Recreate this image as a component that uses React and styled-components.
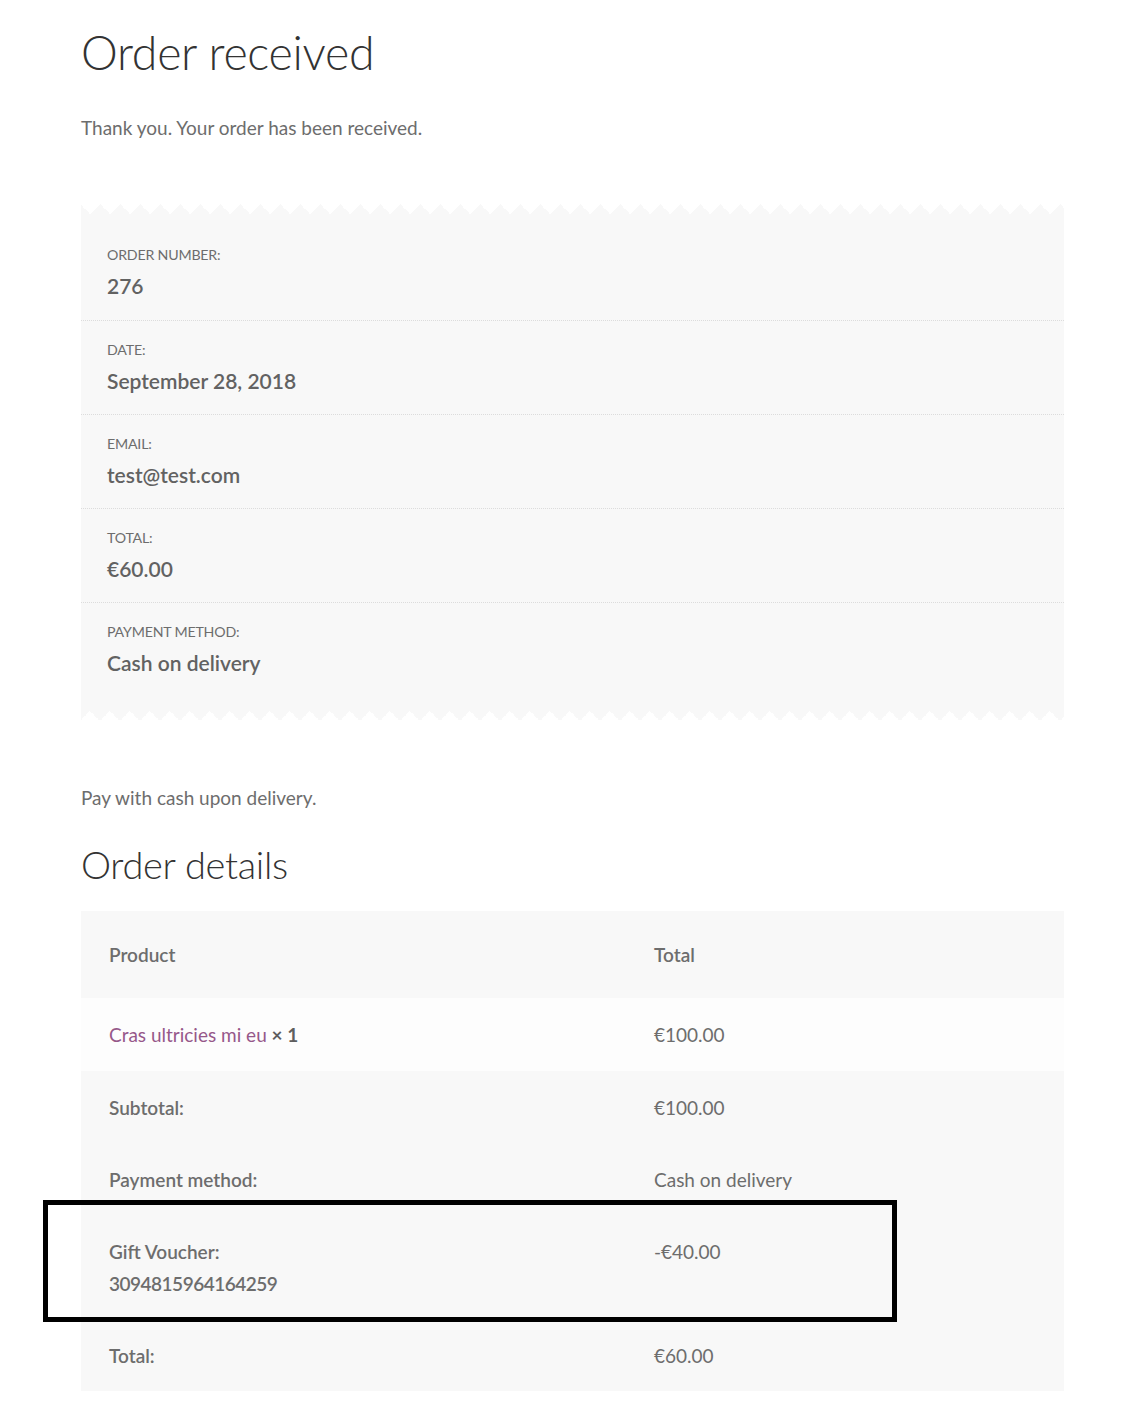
import styled, { createGlobalStyle } from "styled-components"

const Global = createGlobalStyle`
    body {
        margin: 0;
        background: #ffffff;
        font-family: "Lato", "Open Sans", "Liberation Sans", sans-serif;
        color: #6d6d6d;
    }
`

const Page = styled.div`
    width: 983px;
    padding: 22px 0 36px 81px;
`

const Title = styled.h1`
    margin: 0;
    font-size: 46.5px;
    line-height: 60px;
    font-weight: 300;
    color: #333333;
    letter-spacing: -0.3px;
`

const SubTitle = styled.h2`
    margin: 29px 0 24px;
    font-size: 38px;
    line-height: 46px;
    font-weight: 300;
    color: #333333;
    letter-spacing: -0.3px;
`

const Text = styled.p`
    margin: ${(props) => props.margin || "0"};
    font-size: 19px;
    line-height: 29px;
`

const Panel = styled.div`
    margin-top: 62px;
`

const Zigzag = styled.div`
    height: 10px;
    background-size: 20px 10px;
    background-repeat: repeat-x;
    background-position: 9px 0;
    background-image: ${(props) =>
        props.edge === "bottom"
            ? "conic-gradient(from -45deg at 50% 100%, #f8f8f8 90deg, transparent 0deg)"
            : "conic-gradient(from 135deg at 50% 0%, #f8f8f8 90deg, transparent 0deg)"};
`

const Overview = styled.ul`
    list-style: none;
    margin: 0;
    padding: 12px 0 15px;
    background: #f8f8f8;
`

const OverviewItem = styled.li`
    padding: 18px 26px 19px;
    height: 57px;
    & + & {
        height: 56px;
        border-top: 1px dotted #dcdcdc;
    }
`

const Label = styled.div`
    font-size: 14.2px;
    line-height: 22px;
    text-transform: uppercase;
    letter-spacing: -0.2px;
`

const Value = styled.strong`
    display: block;
    margin-top: 5px;
    font-size: 21px;
    line-height: 30px;
    font-weight: 600;
    color: #626262;
`

const Table = styled.table`
    width: 983px;
    border-collapse: collapse;
    border-spacing: 0;
    font-size: 19px;
    line-height: 29px;
`

const Cell = styled.td`
    padding: ${(props) => props.pad || "21.5px"} 28px;
    text-align: left;
    vertical-align: top;
    font-weight: ${(props) => (props.bold ? 600 : 400)};
    width: ${(props) => props.width || "auto"};
    background: ${(props) => props.bg || "#f8f8f8"};
    position: relative;
`

const ProductLink = styled.a`
    color: #96588a;
    text-decoration: none;
`

const Quantity = styled.strong`
    font-weight: 700;
    color: #5e5e5e;
`

const Code = styled.span`
    display: block;
    margin-top: 3px;
    letter-spacing: -0.5px;
`

const Highlight = styled.div`
    position: absolute;
    z-index: 5;
    left: -38px;
    top: -15px;
    width: 854px;
    height: 122px;
    box-sizing: border-box;
    border: 5px solid #000000;
    pointer-events: none;
`

const overview = [
    ["Order number:", "276"],
    ["Date:", "September 28, 2018"],
    ["Email:", "test@test.com"],
    ["Total:", "€60.00"],
    ["Payment method:", "Cash on delivery"],
]

function App() {
    return (
        <Page>
            <Global />
            <Title>Order received</Title>
            <Text margin="31px 0 0">Thank you. Your order has been received.</Text>

            <Panel>
                <Zigzag edge="top" />
                <Overview>
                    {overview.map(([label, value]) => (
                        <OverviewItem key={label}>
                            <Label>{label}</Label>
                            <Value>{value}</Value>
                        </OverviewItem>
                    ))}
                </Overview>
                <Zigzag edge="bottom" />
            </Panel>

            <Text margin="62px 0 0">Pay with cash upon delivery.</Text>

            <SubTitle>Order details</SubTitle>

            <Table>
                <thead>
                    <tr>
                        <Cell as="th" bold pad="29px" width="489px">Product</Cell>
                        <Cell as="th" bold pad="29px">Total</Cell>
                    </tr>
                </thead>
                <tbody>
                    <tr>
                        <Cell bg="#fdfdfd" pad="22px">
                            <ProductLink href="#">Cras ultricies mi eu</ProductLink> <Quantity>× 1</Quantity>
                        </Cell>
                        <Cell bg="#fdfdfd" pad="22px">€100.00</Cell>
                    </tr>
                </tbody>
                <tfoot>
                    <tr>
                        <Cell as="th" bold>Subtotal:</Cell>
                        <Cell>€100.00</Cell>
                    </tr>
                    <tr>
                        <Cell as="th" bold>Payment method:</Cell>
                        <Cell>Cash on delivery</Cell>
                    </tr>
                    <tr>
                        <Cell as="th" bold>
                            Gift Voucher:
                            <Code>3094815964164259</Code>
                            <Highlight />
                        </Cell>
                        <Cell>-€40.00</Cell>
                    </tr>
                    <tr>
                        <Cell as="th" bold>Total:</Cell>
                        <Cell>€60.00</Cell>
                    </tr>
                </tfoot>
            </Table>
        </Page>
    )
}

export default App
